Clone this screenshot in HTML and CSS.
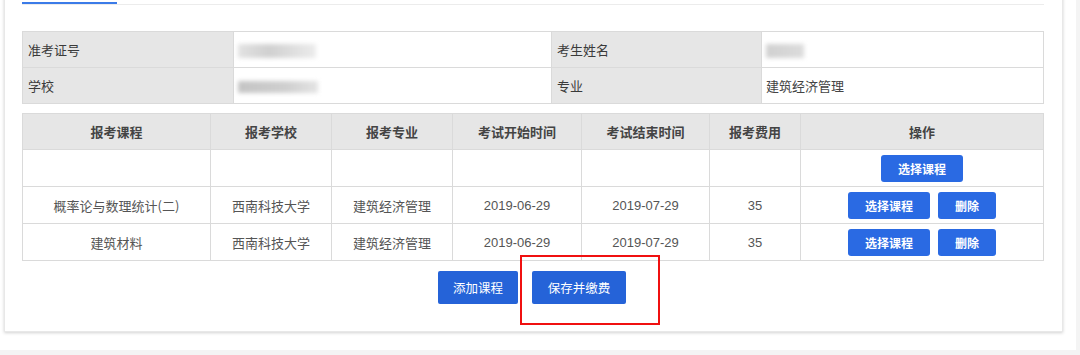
FILE: index.html
```html
<!DOCTYPE html>
<html>
<head>
<meta http-equiv="Content-Type" content="text/html; charset=utf-8"/>
<title>报考课程</title>
<link rel="stylesheet" href="styles.css">
</head>
<body>
<div class="page">
  <div class="card">
    <div class="tabs"><div class="tab"></div></div>

    <table class="info">
      <colgroup><col style="width:211px"><col style="width:318px"><col style="width:210px"><col style="width:282px"></colgroup>
      <tr>
        <td class="label">准考证号</td>
        <td class="value"><span class="mask mask-id"></span></td>
        <td class="label">考生姓名</td>
        <td class="value"><span class="mask mask-name"></span></td>
      </tr>
      <tr>
        <td class="label">学校</td>
        <td class="value"><span class="mask mask-school"></span></td>
        <td class="label">专业</td>
        <td class="value">建筑经济管理</td>
      </tr>
    </table>

    <table class="courses">
      <colgroup>
        <col style="width:188px"><col style="width:121px"><col style="width:121px"><col style="width:129px">
        <col style="width:128px"><col style="width:91px"><col style="width:243px">
      </colgroup>
      <tr>
        <th>报考课程</th><th>报考学校</th><th>报考专业</th><th>考试开始时间</th><th>考试结束时间</th><th>报考费用</th><th>操作</th>
      </tr>
      <tr>
        <td></td><td></td><td></td><td></td><td></td><td></td>
        <td><span class="btn btn-sm btn-pick">选择课程</span></td>
      </tr>
      <tr>
        <td>概率论与数理统计(二)</td><td>西南科技大学</td><td>建筑经济管理</td>
        <td class="num">2019-06-29</td><td class="num">2019-07-29</td><td class="num">35</td>
        <td><span class="btn btn-sm btn-pick">选择课程</span><span class="btn btn-sm btn-del">删除</span></td>
      </tr>
      <tr>
        <td>建筑材料</td><td>西南科技大学</td><td>建筑经济管理</td>
        <td class="num">2019-06-29</td><td class="num">2019-07-29</td><td class="num">35</td>
        <td><span class="btn btn-sm btn-pick">选择课程</span><span class="btn btn-sm btn-del">删除</span></td>
      </tr>
    </table>

    <div class="actions">
      <span class="btn btn-add">添加课程</span>
      <span class="btn btn-save">保存并缴费</span>
      <div class="highlight"></div>
    </div>
  </div>
</div>
</body>
</html>
```
FILE: styles.css
```css
body {
  margin: 0;
  background-color: #f4f4f4;
  font-family: "Noto Sans CJK SC", "Liberation Sans", sans-serif;
  font-size: 13px;
  color: #333;
}

.page {
  width: 1076px;
  height: 350px;
  background-color: #fff;
  overflow: hidden;
}

.card {
  margin: -10px 0 0 4px;
  width: 1022px;
  padding: 0 18px 27px 17px;
  background: #fff;
  border: 1px solid #e8e8e8;
  box-shadow: 0 1px 3px rgba(0, 0, 0, 0.18);
}

.tabs {
  height: 13px;
  border-bottom: 1px solid #ececec;
}

.tab {
  width: 95px;
  height: 11px;
  border-bottom: 2px solid #3b7be8;
}

table {
  border-collapse: collapse;
  table-layout: fixed;
  width: 1021px;
}

td, th {
  border: 1px solid #dadada;
  padding: 0;
}

.info {
  margin-top: 26px;
}

.info td {
  height: 35px;
}

.info .label {
  background-color: #e6e6e6;
  padding-left: 5px;
  color: #3a3a3a;
}

.info .value {
  padding-left: 4px;
  color: #444;
}

.mask {
  display: inline-block;
  vertical-align: middle;
  background: #c8c8c8;
  filter: blur(2px);
}

.mask-id {
  width: 78px;
  height: 14px;
  background: linear-gradient(90deg, #e2e2e2, #d0d0d0 40%, #ececec);
}

.mask-school {
  width: 80px;
  height: 12px;
  background: linear-gradient(90deg, #c4c4c4, #cfcfcf 60%, #e4e4e4);
}

.mask-name {
  width: 38px;
  height: 14px;
  background: linear-gradient(90deg, #d0d0d0, #dcdcdc);
}

.courses {
  margin-top: 9px;
}

.courses th {
  height: 35px;
  background-color: #e6e6e6;
  font-weight: bold;
  color: #444;
}

.courses td {
  height: 36px;
  text-align: center;
  color: #555;
}

.courses .num {
  font-family: "Liberation Sans", sans-serif;
  font-size: 13px;
}

.btn {
  display: inline-block;
  background-color: #2a6ae3;
  color: #fff;
  border-radius: 3px;
  text-align: center;
  vertical-align: middle;
}

.btn-sm {
  height: 27px;
  line-height: 27px;
  font-size: 12px;
  font-weight: bold;
}

.btn-pick {
  width: 82px;
}

.btn-del {
  width: 58px;
  margin-left: 8px;
}

.actions {
  position: relative;
  margin-top: 10px;
  display: flex;
  justify-content: center;
  gap: 14px;
  padding-right: 2px;
}

.btn-add,
.btn-save {
  height: 33px;
  line-height: 33px;
  font-size: 12.5px;
  font-weight: normal;
  background-color: #2563d8;
  border-radius: 2px;
}

.btn-add {
  width: 80px;
}

.btn-save {
  width: 94px;
}

.highlight {
  position: absolute;
  left: 498px;
  top: -16px;
  width: 136px;
  height: 66px;
  border: 2px solid #f01010;
}
```
